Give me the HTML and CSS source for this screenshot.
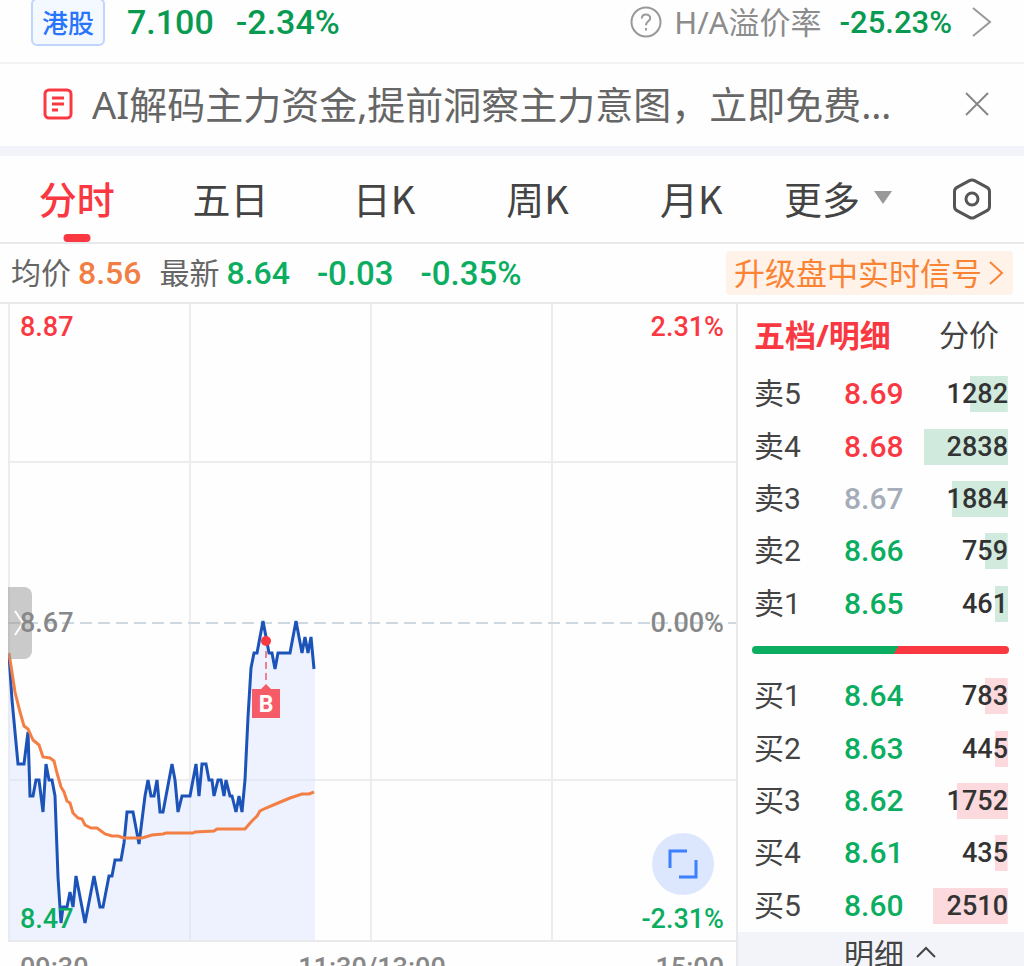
FILE: index.html
```
<!DOCTYPE html>
<html lang="zh-CN">
<head>
    <meta charset="UTF-8">
    <meta name="viewport" content="width=device-width, initial-scale=1.0">
    <title>分时行情</title>
    <link rel="stylesheet" href="styles.css">
</head>
<body>
    <div class="app">
        <header class="market-row">
            <span class="market-badge">港股</span>
            <span class="market-price">7.100</span>
            <span class="market-change">-2.34%</span>
            <a class="premium" href="#">
                <svg class="icon-help" viewBox="0 0 32 32" aria-hidden="true">
                    <circle cx="16" cy="16" r="14.5"/>
                    <path d="M11.8 12.6c0-2.6 1.8-4.2 4.2-4.2s4.2 1.6 4.2 3.8c0 3-4.2 3.4-4.2 7"/>
                    <path d="M16 22v2.4"/>
                </svg>
                <span class="premium-label">H/A溢价率</span>
                <span class="premium-value">-25.23%</span>
                <svg class="icon-next" viewBox="0 0 20 30" aria-hidden="true"><path d="M1 1l17 14L1 29"/></svg>
            </a>
        </header>

        <div class="notice">
            <svg class="icon-news" viewBox="0 0 30 32" aria-hidden="true">
                <rect x="2" y="2" width="26" height="28" rx="4"/>
                <path d="M9 10h12M9 16h12M9 22h6"/>
            </svg>
            <a class="notice-text" href="#">AI解码主力资金,提前洞察主力意图，立即免费…</a>
            <button class="notice-close" aria-label="关闭">
                <svg viewBox="0 0 24 24"><path d="M1 1l22 22M23 1L1 23"/></svg>
            </button>
        </div>

        <nav class="tabs">
            <button class="tab active">分时</button>
            <button class="tab">五日</button>
            <button class="tab">日K</button>
            <button class="tab">周K</button>
            <button class="tab">月K</button>
            <button class="tab-more">更多
                <svg viewBox="0 0 18 13" aria-hidden="true"><path d="M0 0h18L9 13z"/></svg>
            </button>
            <button class="tab-settings" aria-label="设置">
                <svg viewBox="0 0 40 42">
                    <path d="M17.5 2.6Q20 1.2 22.5 2.6L35 9.4Q37.5 10.8 37.5 13.6V28.4Q37.5 31.2 35 32.6L22.5 39.4Q20 40.8 17.5 39.4L5 32.6Q2.5 31.2 2.5 28.4V13.6Q2.5 10.8 5 9.4Z"/>
                    <circle cx="20" cy="21" r="6"/>
                </svg>
            </button>
        </nav>

        <div class="quote">
            <span class="quote-label">均价</span>
            <span class="quote-value avg">8.56</span>
            <span class="quote-label last-label">最新</span>
            <span class="quote-value down">8.64</span>
            <span class="quote-value diff down">-0.03</span>
            <span class="quote-value diff down">-0.35%</span>
            <a class="upgrade" href="#"><span>升级盘中实时信号</span><svg viewBox="0 0 16 24" aria-hidden="true"><path d="M2 1l12 11L2 23"/></svg></a>
        </div>

        <main class="content">
            <section class="chart">
                <div class="plot">
                    <svg class="plot-lines" viewBox="0 1 728 636" aria-hidden="true">
                        <path class="grid" d="M1 0V637M182 0V637M363 0V637M544 0V637M0 159H728M0 477H728"/>
                        <path class="base" d="M0 320H728"/>
                        <!-- 成交价 -->
                        <path class="area" d="M1 352L4 397 10 461 16 461 20 429 22 493 25 493 28 477 31 477 35 509 38 461 41 477 44 477 47 493 50 574 53 620 55 604 59 604 62 589 65 604 68 573 77 620 86 573 92 604 95 604 101 573 104 573 107 557 113 557 116 540 119 509 125 509 131 541 137 493 140 477 143 493 146 493 149 477 152 509 155 509 164 461 167 477 170 509 174 493 182 493 188 461 191 493 194 461 198 461 201 477 204 477 206 493 210 477 213 477 216 493 218 477 222 493 224 493 228 509 231 493 234 509 237 477 240 414 243 365 246 350 249 350 255 318 261 350 264 350 267 366 270 350 282 350 288 318 294 350 297 334 300 350 303 334 306 366 307 366V637H1Z"/>
                        <polyline class="price-line" points="1,352 4,397 10,461 16,461 20,429 22,493 25,493 28,477 31,477 35,509 38,461 41,477 44,477 47,493 50,574 53,620 55,604 59,604 62,589 65,604 68,573 77,620 86,573 92,604 95,604 101,573 104,573 107,557 113,557 116,540 119,509 125,509 131,541 137,493 140,477 143,493 146,493 149,477 152,509 155,509 164,461 167,477 170,509 174,493 182,493 188,461 191,493 194,461 198,461 201,477 204,477 206,493 210,477 213,477 216,493 218,477 222,493 224,493 228,509 231,493 234,509 237,477 240,414 243,365 246,350 249,350 255,318 261,350 264,350 267,366 270,350 282,350 288,318 294,350 297,334 300,350 303,334 306,366"/>
                        <!-- 均价 -->
                        <polyline class="avg-line" points="1,350 7,389 12,409 16,423 20,426 25,437 31,442 35,454 42,455 46,458 49,470 53,484 56,489 59,498 62,500 65,510 70,515 74,516 77,522 83,525 89,525 97,531 104,533 110,533 116,535 134,535 144,532 155,531 158,530 185,530 187,529 206,528 209,526 237,526 243,519 249,513 252,508 258,505 270,500 282,495 294,491 301,491 306,489"/>
                        <!-- 买点标记 -->
                        <path class="mark-stem" d="M258 348V380"/>
                        <circle class="mark-dot" cx="258" cy="338" r="5"/>
                        <path class="mark-box" d="M244 386H253L258 381 263 386H272V415H244Z"/>
                        <text class="mark-text" x="258" y="409">B</text>
                    </svg>
                    <button class="drawer" aria-label="展开">
                        <svg viewBox="0 0 10 26"><path d="M1 1l8 12-8 12"/></svg>
                    </button>
                    <span class="scale top-left up">8.87</span>
                    <span class="scale top-right up">2.31%</span>
                    <span class="scale mid-left">8.67</span>
                    <span class="scale mid-right">0.00%</span>
                    <span class="scale bottom-left down">8.47</span>
                    <span class="scale bottom-right down">-2.31%</span>
                    <button class="fullscreen" aria-label="全屏">
                        <svg viewBox="0 0 30 30"><path d="M2 19V2h17M11 28h17V11"/></svg>
                    </button>
                </div>
                <div class="time-axis">
                    <span>09:30</span>
                    <span>11:30/13:00</span>
                    <span>15:00</span>
                </div>
            </section>

            <aside class="book">
                <div class="book-tabs">
                    <button class="book-tab active">五档/明细</button>
                    <button class="book-tab">分价</button>
                </div>
                <table class="levels sell">
                    <tr><th scope="row">卖5</th><td class="up">8.69</td><td><span class="volume" style="background-size: 45% 100%">1282</span></td></tr>
                    <tr><th scope="row">卖4</th><td class="up">8.68</td><td><span class="volume" style="background-size: 100% 100%">2838</span></td></tr>
                    <tr><th scope="row">卖3</th><td class="flat">8.67</td><td><span class="volume" style="background-size: 67% 100%">1884</span></td></tr>
                    <tr><th scope="row">卖2</th><td class="down">8.66</td><td><span class="volume" style="background-size: 27% 100%">759</span></td></tr>
                    <tr><th scope="row">卖1</th><td class="down">8.65</td><td><span class="volume" style="background-size: 16% 100%">461</span></td></tr>
                </table>
                <div class="ratio"></div>
                <table class="levels buy">
                    <tr><th scope="row">买1</th><td class="down">8.64</td><td><span class="volume" style="background-size: 27% 100%">783</span></td></tr>
                    <tr><th scope="row">买2</th><td class="down">8.63</td><td><span class="volume" style="background-size: 16% 100%">445</span></td></tr>
                    <tr><th scope="row">买3</th><td class="down">8.62</td><td><span class="volume" style="background-size: 61% 100%">1752</span></td></tr>
                    <tr><th scope="row">买4</th><td class="down">8.61</td><td><span class="volume" style="background-size: 15% 100%">435</span></td></tr>
                    <tr><th scope="row">买5</th><td class="down">8.60</td><td><span class="volume" style="background-size: 89% 100%">2510</span></td></tr>
                </table>
                <button class="book-detail">明细
                    <svg viewBox="0 0 20 12" aria-hidden="true"><path d="M1 11l9-9 9 9"/></svg>
                </button>
            </aside>
        </main>
    </div>
</body>
</html>
```
FILE: styles.css
```
:root {
    --red: #f93842;
    --green: #0bad61;
    --dark-green: #099a52;
    --orange: #fb8334;
    --blue: #1c53b8;
    --text: #444;
    --line: #e9e9eb;
    --panel: #f2f4f9;
}

* {
    box-sizing: border-box;
}

body {
    margin: 0;
    background-color: #fefefe;
    color: var(--text);
    font-family: "Noto Sans CJK SC", sans-serif;
}

button {
    padding: 0;
    border: none;
    background: none;
    color: inherit;
    font: inherit;
    cursor: pointer;
}

a {
    color: inherit;
    text-decoration: none;
}

svg {
    display: block;
    flex: none;
    fill: none;
    stroke: currentColor;
    stroke-width: 2;
}

.app {
    height: 100vh;
    overflow: hidden;
}

.up {
    color: var(--red);
}

.down {
    color: var(--green);
}

.flat {
    color: #a5adb9;
}

/* 港股行情 */
.market-row {
    display: flex;
    align-items: center;
    height: 64px;
    padding: 0 32px 18px 31px;
    border-bottom: 2px solid #f2f2f4;
    color: var(--dark-green);
    white-space: nowrap;
}

.market-badge {
    padding: 0 9px;
    border: 2px solid #bfd5fd;
    border-radius: 6px;
    background-color: #f4f8ff;
    color: #2775fc;
    font-size: 26px;
    font-weight: 500;
    line-height: 44px;
}

.market-price,
.market-change {
    margin-left: 22px;
    font-family: Roboto, sans-serif;
    font-size: 34px;
    font-weight: 500;
}

.premium {
    display: flex;
    align-items: center;
    margin-left: auto;
}

.icon-help {
    width: 32px;
    height: 32px;
    color: #999;
}

.premium-label {
    margin-left: 12px;
    color: #8c8c8c;
    font-family: "Noto Sans", "Noto Sans CJK SC", sans-serif;
    font-size: 31px;
    line-height: 40px;
}

.premium-value {
    margin: 0 20px 0 18px;
    font-family: Roboto, sans-serif;
    font-size: 31px;
    font-weight: 500;
}

.icon-next {
    width: 20px;
    height: 30px;
    color: #999;
}

/* 提示条 */
.notice {
    display: flex;
    align-items: center;
    height: 92px;
    padding: 0 35px 2px 43px;
    border-bottom: 10px solid var(--panel);
}

.icon-news {
    width: 30px;
    height: 32px;
    color: var(--red);
    stroke-width: 3;
}

.notice-text {
    flex: 1;
    margin-left: 19px;
    overflow: hidden;
    color: #666;
    font-family: "Noto Sans", "Noto Sans CJK SC", sans-serif;
    font-size: 38px;
    line-height: 56px;
    white-space: nowrap;
}

.notice-close svg {
    width: 24px;
    height: 24px;
    color: #888;
}

/* 周期切换 */
.tabs {
    display: flex;
    height: 88px;
    border-bottom: 2px solid var(--line);
    font-size: 38px;
}

.tab {
    position: relative;
    flex: 0 0 15%;
    padding-bottom: 4px;
}

.tab.active {
    color: var(--red);
    font-weight: 500;
}

.tab.active::after {
    content: "";
    position: absolute;
    bottom: 0;
    left: 50%;
    width: 27px;
    height: 8px;
    border-radius: 4px;
    background-color: var(--red);
    transform: translateX(-50%);
}

.tab-more {
    display: flex;
    align-items: center;
    gap: 14px;
    margin-left: 16px;
    padding-bottom: 4px;
}

.tab-more svg {
    width: 18px;
    height: 13px;
    fill: #999;
    stroke: none;
}

.tab-settings {
    margin: 0 32px 0 auto;
}

.tab-settings svg {
    width: 40px;
    height: 42px;
    color: #555;
    stroke-width: 3;
}

/* 报价 */
.quote {
    display: flex;
    align-items: center;
    height: 58px;
    padding: 0 11px;
    white-space: nowrap;
}

.quote-label {
    padding-bottom: 4px;
    color: #666;
    font-size: 30px;
}

.last-label {
    margin-left: 18px;
}

.quote-value {
    margin-left: 7px;
    font-family: Roboto, sans-serif;
    font-size: 32px;
    font-weight: 500;
}

.quote-value.diff {
    margin-left: 27px;
    font-size: 33px;
}

.avg {
    color: #f17f43;
}

.upgrade {
    display: flex;
    align-items: center;
    gap: 6px;
    height: 44px;
    margin-left: auto;
    padding: 0 9px 0 8px;
    border-radius: 4px;
    background-color: #fff2e9;
    color: var(--orange);
    font-size: 31px;
}

.upgrade span {
    padding-bottom: 4px;
}

.upgrade svg {
    width: 16px;
    height: 24px;
}

/* 分时图与盘口 */
.content {
    display: grid;
    grid-template-columns: 1fr 288px;
    border-top: 2px solid var(--line);
}

.chart {
    padding-left: 8px;
}

.plot {
    position: relative;
    border-bottom: 2px solid var(--line);
}

.plot-lines {
    width: 100%;
    height: auto;
}

.grid {
    stroke: #ededef;
}

.base {
    stroke: #ced8e0;
    stroke-dasharray: 12 6;
}

.area {
    fill: #d9e4fe;
    fill-opacity: 0.45;
    stroke: none;
}

.price-line {
    stroke: var(--blue);
    stroke-width: 3;
}

.avg-line {
    stroke: #f47f45;
    stroke-width: 3;
}

.mark-stem {
    stroke: #f0808b;
    stroke-dasharray: 7 4;
}

.mark-dot {
    fill: var(--red);
    stroke: none;
}

.mark-box {
    fill: #f65c68;
    stroke: none;
}

.mark-text {
    fill: #fff;
    stroke: none;
    font-family: Roboto, sans-serif;
    font-size: 23px;
    font-weight: 700;
    text-anchor: middle;
}

.drawer {
    position: absolute;
    top: 283px;
    left: 0;
    width: 24px;
    height: 72px;
    padding-left: 6px;
    border-radius: 0 8px 8px 0;
    background-color: rgba(150, 150, 150, 0.5);
    color: #fff;
}

.drawer svg {
    width: 10px;
    height: 26px;
}

.scale {
    position: absolute;
    color: #888;
    font-family: Roboto, sans-serif;
    font-size: 27px;
    font-weight: 500;
    line-height: 32px;
}

.scale.up {
    color: var(--red);
}

.scale.down {
    color: var(--green);
}

.top-left,
.top-right {
    top: 7px;
}

.mid-left,
.mid-right {
    top: 303px;
}

.bottom-left,
.bottom-right {
    bottom: 5px;
}

.top-left,
.mid-left,
.bottom-left {
    left: 12px;
}

.top-right,
.mid-right,
.bottom-right {
    right: 12px;
}

.fullscreen {
    display: flex;
    align-items: center;
    justify-content: center;
    position: absolute;
    right: 22px;
    bottom: 45px;
    width: 62px;
    height: 62px;
    border-radius: 50%;
    background-color: #dce7fe;
    color: #3b80fc;
}

.fullscreen svg {
    width: 30px;
    height: 30px;
    stroke-width: 3;
}

.time-axis {
    display: flex;
    justify-content: space-between;
    padding: 10px 12px 0;
    color: #888;
    font-family: Roboto, sans-serif;
    font-size: 27px;
    font-weight: 500;
}

.book {
    border-left: 2px solid var(--line);
}

.book-tabs {
    display: flex;
    align-items: center;
    justify-content: space-between;
    height: 64px;
    padding: 0 25px 6px 16px;
    font-size: 30px;
}

.book-tab.active {
    color: var(--red);
    font-family: "Noto Sans", "Noto Sans CJK SC", sans-serif;
    font-size: 31px;
    font-weight: 700;
}

.levels {
    width: 100%;
    height: 262px;
    border-collapse: collapse;
    table-layout: fixed;
}

.levels th,
.levels td {
    padding: 0;
    font-family: Roboto, "Noto Sans CJK SC", sans-serif;
    font-size: 30px;
    font-weight: 500;
    line-height: 36px;
    text-align: left;
}

.levels th {
    width: 106px;
    padding-left: 16px;
    font-weight: 400;
}

.levels td:last-child {
    width: 100px;
    padding-right: 16px;
}

.volume {
    display: block;
    background-position: right;
    background-repeat: no-repeat;
    color: #333;
    font-size: 27px;
    text-align: right;
}

.sell .volume {
    background-image: linear-gradient(#d0eadd, #d0eadd);
}

.buy .volume {
    background-image: linear-gradient(#fcd9dc, #fcd9dc);
}

.ratio {
    height: 8px;
    margin: 16px 15px 16px 14px;
    border-radius: 4px;
    background: linear-gradient(120deg, var(--green) 56%, var(--red) 56%);
}

.book-detail {
    display: flex;
    align-items: center;
    justify-content: center;
    gap: 12px;
    width: 100%;
    height: 40px;
    padding-left: 18px;
    background-color: var(--panel);
    font-size: 30px;
}

.book-detail svg {
    width: 20px;
    height: 12px;
}
```
